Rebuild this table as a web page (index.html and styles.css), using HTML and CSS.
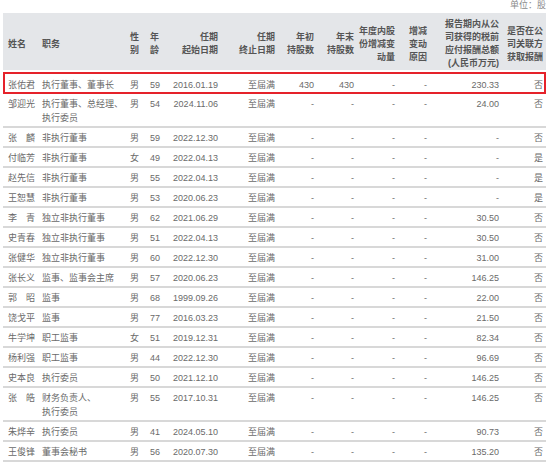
FILE: index.html
```html
<!DOCTYPE html>
<html lang="zh-CN">
<head>
<meta charset="utf-8">
<link rel="stylesheet" href="styles.css">
</head>
<body>
<div class="page">
  <div class="unit">单位：股</div>
  <table class="tbl">
    <colgroup>
      <col class="w-name"><col class="w-pos"><col class="w-sex"><col class="w-age">
      <col class="w-date"><col class="w-date"><col class="w-s1"><col class="w-s2">
      <col class="w-chg"><col class="w-rsn"><col class="w-pay"><col class="w-rel">
    </colgroup>
    <thead>
      <tr>
        <th class="l c1">姓名</th>
        <th class="l c2">职务</th>
        <th class="l c3">性<br>别</th>
        <th class="l c4">年<br>龄</th>
        <th>任期<br>起始日期</th>
        <th>任期<br>终止日期</th>
        <th>年初<br>持股数</th>
        <th>年末<br>持股数</th>
        <th>年度内股<br>份增减变<br>动量</th>
        <th>增减<br>变动<br>原因</th>
        <th>报告期内从公<br>司获得的税前<br>应付报酬总额<br>(人民币万元)</th>
        <th class="last">是否在公<br>司关联方<br>获取报酬</th>
      </tr>
    </thead>
    <tbody>
      <tr class="hl"><td class="l c1">张佑君</td><td class="l c2">执行董事、董事长</td><td class="l c3">男</td><td class="l c4">59</td><td>2016.01.19</td><td>至届满</td><td>430</td><td>430</td><td>-</td><td>-</td><td>230.33</td><td class="last">否</td></tr>
      <tr><td class="l c1">邹迎光</td><td class="l c2">执行董事、总经理、<br>执行委员</td><td class="l c3">男</td><td class="l c4">54</td><td>2024.11.06</td><td>至届满</td><td>-</td><td>-</td><td>-</td><td>-</td><td>24.00</td><td class="last">否</td></tr>
      <tr><td class="l c1">张　麟</td><td class="l c2">非执行董事</td><td class="l c3">男</td><td class="l c4">59</td><td>2022.12.30</td><td>至届满</td><td>-</td><td>-</td><td>-</td><td>-</td><td>-</td><td class="last">否</td></tr>
      <tr><td class="l c1">付临芳</td><td class="l c2">非执行董事</td><td class="l c3">女</td><td class="l c4">49</td><td>2022.04.13</td><td>至届满</td><td>-</td><td>-</td><td>-</td><td>-</td><td>-</td><td class="last">是</td></tr>
      <tr><td class="l c1">赵先信</td><td class="l c2">非执行董事</td><td class="l c3">男</td><td class="l c4">55</td><td>2022.04.13</td><td>至届满</td><td>-</td><td>-</td><td>-</td><td>-</td><td>-</td><td class="last">是</td></tr>
      <tr><td class="l c1">王恕慧</td><td class="l c2">非执行董事</td><td class="l c3">男</td><td class="l c4">53</td><td>2020.06.23</td><td>至届满</td><td>-</td><td>-</td><td>-</td><td>-</td><td>-</td><td class="last">是</td></tr>
      <tr><td class="l c1">李　青</td><td class="l c2">独立非执行董事</td><td class="l c3">男</td><td class="l c4">62</td><td>2021.06.29</td><td>至届满</td><td>-</td><td>-</td><td>-</td><td>-</td><td>30.50</td><td class="last">否</td></tr>
      <tr><td class="l c1">史青春</td><td class="l c2">独立非执行董事</td><td class="l c3">男</td><td class="l c4">51</td><td>2022.04.13</td><td>至届满</td><td>-</td><td>-</td><td>-</td><td>-</td><td>30.50</td><td class="last">否</td></tr>
      <tr><td class="l c1">张健华</td><td class="l c2">独立非执行董事</td><td class="l c3">男</td><td class="l c4">60</td><td>2022.12.30</td><td>至届满</td><td>-</td><td>-</td><td>-</td><td>-</td><td>31.00</td><td class="last">否</td></tr>
      <tr><td class="l c1">张长义</td><td class="l c2">监事、监事会主席</td><td class="l c3">男</td><td class="l c4">57</td><td>2020.06.23</td><td>至届满</td><td>-</td><td>-</td><td>-</td><td>-</td><td>146.25</td><td class="last">否</td></tr>
      <tr><td class="l c1">郭　昭</td><td class="l c2">监事</td><td class="l c3">男</td><td class="l c4">68</td><td>1999.09.26</td><td>至届满</td><td>-</td><td>-</td><td>-</td><td>-</td><td>22.00</td><td class="last">否</td></tr>
      <tr><td class="l c1">饶戈平</td><td class="l c2">监事</td><td class="l c3">男</td><td class="l c4">77</td><td>2016.03.23</td><td>至届满</td><td>-</td><td>-</td><td>-</td><td>-</td><td>21.50</td><td class="last">否</td></tr>
      <tr><td class="l c1">牛学坤</td><td class="l c2">职工监事</td><td class="l c3">女</td><td class="l c4">51</td><td>2019.12.31</td><td>至届满</td><td>-</td><td>-</td><td>-</td><td>-</td><td>82.34</td><td class="last">否</td></tr>
      <tr><td class="l c1">杨利强</td><td class="l c2">职工监事</td><td class="l c3">男</td><td class="l c4">44</td><td>2022.12.30</td><td>至届满</td><td>-</td><td>-</td><td>-</td><td>-</td><td>96.69</td><td class="last">否</td></tr>
      <tr><td class="l c1">史本良</td><td class="l c2">执行委员</td><td class="l c3">男</td><td class="l c4">50</td><td>2021.12.10</td><td>至届满</td><td>-</td><td>-</td><td>-</td><td>-</td><td>146.25</td><td class="last">否</td></tr>
      <tr><td class="l c1">张　皓</td><td class="l c2">财务负责人、<br>执行委员</td><td class="l c3">男</td><td class="l c4">55</td><td>2017.10.31</td><td>至届满</td><td>-</td><td>-</td><td>-</td><td>-</td><td>146.25</td><td class="last">否</td></tr>
      <tr><td class="l c1">朱烨辛</td><td class="l c2">执行委员</td><td class="l c3">男</td><td class="l c4">41</td><td>2024.05.10</td><td>至届满</td><td>-</td><td>-</td><td>-</td><td>-</td><td>90.73</td><td class="last">否</td></tr>
      <tr><td class="l c1">王俊锋</td><td class="l c2">董事会秘书</td><td class="l c3">男</td><td class="l c4">56</td><td>2020.07.30</td><td>至届满</td><td>-</td><td>-</td><td>-</td><td>-</td><td>135.20</td><td class="last">否</td></tr>
    </tbody>
  </table>
</div>
</body>
</html>
```
FILE: styles.css
```css
html, body {
  margin: 0;
  padding: 0;
  background: #ffffff;
}

body {
  font-family: "Liberation Sans", "Noto Sans CJK SC", sans-serif;
  font-size: 9px;
  color: #6a6a6a;
}

.page {
  padding: 0 4px 0 3px;
  width: 543px;
}

.unit {
  height: 13px;
  line-height: 11px;
  text-align: right;
  color: #8a8a8a;
}

.tbl {
  width: 543px;
  table-layout: fixed;
  border-collapse: separate;
  border-spacing: 0;
}

.w-name { width: 35px; }
.w-pos { width: 87px; }
.w-sex { width: 20px; }
.w-age { width: 20px; }
.w-date { width: 57px; }
.w-s1 { width: 39px; }
.w-s2 { width: 40px; }
.w-chg { width: 41px; }
.w-rsn { width: 32px; }
.w-pay { width: 72px; }
.w-rel { width: 43px; }

.tbl th {
  background: #e4e6e9;
  color: #555555;
  font-weight: 700;
  line-height: 13px;
  padding: 5px 4px 0 0;
  height: 52px;
  vertical-align: middle;
  text-align: right;
  white-space: nowrap;
  border-bottom: 2px solid #ffffff;
}

.tbl td {
  line-height: 14px;
  padding: 3px 4px 1px 0;
  vertical-align: top;
  text-align: right;
  white-space: nowrap;
  border-bottom: 2px solid #d8d8d8;
}

.tbl .l { text-align: left; padding-right: 0; }
.tbl .c1 { padding-left: 5px; }
.tbl .c2 { padding-left: 4px; }
.tbl .c3 { padding-left: 5px; }
.tbl .c4 { padding-left: 5px; }
.tbl .last { padding-right: 3px; }

.tbl tr.hl td {
  padding-top: 4px;
  padding-bottom: 0;
  border-top: 2px solid #e5222a;
  border-bottom: 2px solid #e5222a;
}

.tbl tr.hl td.c1 {
  border-left: 2px solid #e5222a;
  padding-left: 3px;
}

.tbl tr.hl td.last {
  border-right: 2px solid #e5222a;
  padding-right: 1px;
}
```
